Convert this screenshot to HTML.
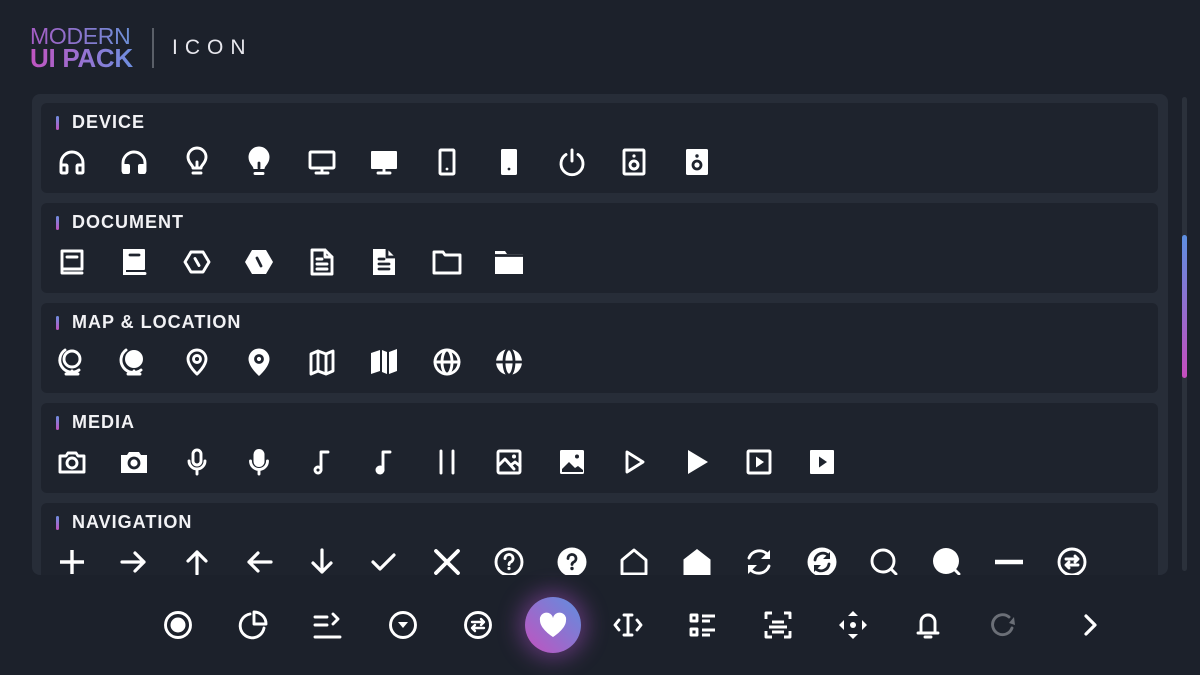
<!DOCTYPE html>
<html><head><meta charset="utf-8"><style>
*{margin:0;padding:0;box-sizing:border-box}
body{width:1200px;height:675px;background:#1c212b;position:relative;overflow:hidden;font-family:"Liberation Sans",sans-serif}
.logo1{position:absolute;left:30px;top:25px;font-size:23px;line-height:22px;font-weight:300;letter-spacing:-0.3px;background:linear-gradient(90deg,#a65cc4,#6d8fd6);-webkit-background-clip:text;color:transparent;transform:scaleX(1.0)}
.logo2{position:absolute;left:30px;top:45px;font-size:26px;line-height:26px;font-weight:bold;letter-spacing:-0.3px;background:linear-gradient(90deg,#c154c1,#6e8fe0);-webkit-background-clip:text;color:transparent}
.sep{position:absolute;left:152px;top:28px;width:2px;height:40px;background:#5a5f68}
.icontxt{position:absolute;left:172px;top:36px;font-size:21px;letter-spacing:7px;color:#e8e8ee;font-weight:300}
.outer{position:absolute;left:32px;top:94px;width:1136px;height:481px;background:#272d38;border-radius:8px;overflow:hidden}
.card{position:absolute;left:9px;width:1117px;height:90px;background:#1e232d;border-radius:6px}
.t{position:absolute;left:31px;top:9px;font-size:18px;font-weight:bold;color:#f2f2f5;letter-spacing:1px}
.bar{position:absolute;left:15px;top:13px;width:3px;height:14px;border-radius:2px;background:linear-gradient(#6d8fe0,#c054c0)}
svg.i{position:absolute;top:43px;width:32px;height:32px;overflow:visible}
.s{fill:none;stroke:#fff;stroke-width:2.9;stroke-linejoin:round;stroke-linecap:round}
.f{fill:#fff}
.d{fill:#1e232d}
.ds{fill:none;stroke:#1e232d;stroke-width:2.8;stroke-linecap:round}
.track{position:absolute;left:1182px;top:97px;width:5px;height:474px;background:#2b313b;border-radius:3px}
.thumb{position:absolute;left:1182px;top:235px;width:5px;height:143px;background:linear-gradient(#5d8fe0,#c54dbd);border-radius:3px}
svg.b{position:absolute;top:609px;width:32px;height:32px;overflow:visible}
.bs{fill:none;stroke:#fff;stroke-width:2.9;stroke-linejoin:round;stroke-linecap:round}
.heart{position:absolute;left:525px;top:597px;width:56px;height:56px;border-radius:50%;background:linear-gradient(45deg,#c352bf,#5f8fdf);box-shadow:0 0 22px 6px rgba(170,80,200,0.45)}
</style></head><body>
<div class="logo1">MODERN</div>
<div class="logo2">UI PACK</div>
<div class="sep"></div>
<div class="icontxt">ICON</div>

<div class="outer">
<div class="card" style="top:9px"><div class="bar"></div><div class="t">DEVICE</div>
<svg class="i" style="left:15px" viewBox="0 0 32 32"><path class="s" d="M5 25v-8a11 11 0 0 1 22 0v8"/><rect class="s" x="5" y="19" width="6" height="8" rx="1"/><rect class="s" x="21" y="19" width="6" height="8" rx="1"/></svg>
<svg class="i" style="left:77px" viewBox="0 0 32 32"><path class="s" d="M5 25v-8a11 11 0 0 1 22 0v8"/><rect class="f" x="4" y="18" width="8" height="10" rx="2"/><rect class="f" x="20" y="18" width="8" height="10" rx="2"/></svg>
<svg class="i" style="left:140px" viewBox="0 0 32 32"><path class="s" d="M12 22c0-3-5-5-5-11a9 9 0 0 1 18 0c0 6-5 8-5 11z"/><path class="s" d="M12 27h8M16 16v6"/></svg>
<svg class="i" style="left:202px" viewBox="0 0 32 32"><path class="f" d="M10.5 23c0-3-5-5.5-5-12a10.5 10.5 0 0 1 21 0c0 6.5-5 9-5 12z"/><path class="s" d="M12 27.5h8"/><path class="ds" d="M16 17v5"/></svg>
<svg class="i" style="left:265px" viewBox="0 0 32 32"><rect class="s" x="4" y="6" width="24" height="16" rx="1"/><path class="s" d="M16 22v4M10 27h12"/></svg>
<svg class="i" style="left:327px" viewBox="0 0 32 32"><rect class="f" x="3" y="5" width="26" height="18" rx="1"/><path class="s" d="M16 22v4M10 27h12"/></svg>
<svg class="i" style="left:390px" viewBox="0 0 32 32"><rect class="s" x="9" y="4" width="14" height="24" rx="1"/><circle class="f" cx="16" cy="23" r="1.4"/></svg>
<svg class="i" style="left:452px" viewBox="0 0 32 32"><rect class="f" x="8" y="3" width="16" height="26" rx="1.5"/><circle class="d" cx="16" cy="23" r="1.4"/></svg>
<svg class="i" style="left:515px" viewBox="0 0 32 32"><path class="s" d="M10 8.5a11 11 0 1 0 12 0"/><path class="s" d="M16 4v11"/></svg>
<svg class="i" style="left:577px" viewBox="0 0 32 32"><rect class="s" x="6" y="4" width="20" height="24" rx="1"/><circle class="s" cx="16" cy="19" r="4"/><circle class="f" cx="16" cy="10" r="1.6"/></svg>
<svg class="i" style="left:640px" viewBox="0 0 32 32"><rect class="f" x="5" y="3" width="22" height="26" rx="1.5"/><circle class="ds" cx="16" cy="19" r="4"/><circle class="d" cx="16" cy="10" r="1.7"/></svg>
</div>
<div class="card" style="top:109px"><div class="bar"></div><div class="t">DOCUMENT</div>
<svg class="i" style="left:15px" viewBox="0 0 32 32"><path class="s" d="M26 27H6V5h20v18H6"/><path class="s" d="M11 11h10"/></svg>
<svg class="i" style="left:77px" viewBox="0 0 32 32"><rect class="f" x="5" y="3" width="22" height="21" rx="1"/><rect class="f" x="5" y="3" width="3" height="26"/><path class="s" d="M7 27.5h20"/><path class="ds" d="M12 9h9"/></svg>
<svg class="i" style="left:140px" viewBox="0 0 32 32"><path class="s" d="M10 6h12l6 10-6 10H10L4 16z"/><path class="s" d="M14 12.5l4 7"/></svg>
<svg class="i" style="left:202px" viewBox="0 0 32 32"><path class="f" d="M9 4h14l7 12-7 12H9L2 16z"/><path class="ds" d="M14 12l4 8"/></svg>
<svg class="i" style="left:265px" viewBox="0 0 32 32"><path class="s" d="M6 4h13l7 7v17H6z"/><path class="s" d="M19 4v7h7M11 13h5M11 18h10M11 23h10"/></svg>
<svg class="i" style="left:327px" viewBox="0 0 32 32"><path class="f" d="M5 3h14l8 8v18H5z"/><path class="ds" d="M19 3v8h8"/><path class="ds" d="M11 13h5M11 18h10M11 23h10"/></svg>
<svg class="i" style="left:390px" viewBox="0 0 32 32"><path class="s" d="M3 6h9l2 3h15v18H3z"/></svg>
<svg class="i" style="left:452px" viewBox="0 0 32 32"><path class="f" d="M2 5h10l2 3h16v20H2z"/><path class="ds" d="M2 9.5h28"/></svg>
</div>
<div class="card" style="top:209px"><div class="bar"></div><div class="t">MAP &amp; LOCATION</div>
<svg class="i" style="left:15px" viewBox="0 0 32 32"><circle class="s" cx="16" cy="13" r="8"/><path class="s" d="M9 4a12 12 0 0 0 14 20M16 25v3M10 28h12"/></svg>
<svg class="i" style="left:77px" viewBox="0 0 32 32"><circle class="f" cx="16" cy="13" r="9"/><path class="s" d="M8 4a12 12 0 0 0 15 20M16 25v3M10 28h12"/></svg>
<svg class="i" style="left:140px" viewBox="0 0 32 32"><path class="s" d="M16 28s-9-8-9-15a9 9 0 0 1 18 0c0 7-9 15-9 15z"/><circle class="s" cx="16" cy="13" r="3.5"/></svg>
<svg class="i" style="left:202px" viewBox="0 0 32 32"><path class="f" d="M16 30S5.5 21 5.5 13a10.5 10.5 0 0 1 21 0c0 8-10.5 17-10.5 17z"/><circle class="ds" cx="16" cy="13" r="3.5"/></svg>
<svg class="i" style="left:265px" viewBox="0 0 32 32"><path class="s" d="M5 8l7-3 8 3 7-3v20l-7 3-8-3-7 3zM12 5v20M20 8v20"/></svg>
<svg class="i" style="left:327px" viewBox="0 0 32 32"><path class="f" d="M3 7l9-3v21l-9 3zM14 4l5 2v22l-5-2zM21 6l8-3v22l-8 3z"/></svg>
<svg class="i" style="left:390px" viewBox="0 0 32 32"><circle class="s" cx="16" cy="16" r="12"/><ellipse class="s" cx="16" cy="16" rx="5" ry="12"/><path class="s" d="M4 16h24"/></svg>
<svg class="i" style="left:452px" viewBox="0 0 32 32"><circle class="f" cx="16" cy="16" r="13"/><ellipse class="ds" cx="16" cy="16" rx="5" ry="13"/><path class="ds" d="M3 16h26"/></svg>
</div>
<div class="card" style="top:309px"><div class="bar"></div><div class="t">MEDIA</div>
<svg class="i" style="left:15px" viewBox="0 0 32 32"><path class="s" d="M4 10h6l2-3h8l2 3h6v16H4z"/><circle class="s" cx="16" cy="17" r="5"/></svg>
<svg class="i" style="left:77px" viewBox="0 0 32 32"><path class="f" d="M3 9h6l2-3h10l2 3h6v18H3z"/><circle class="ds" cx="16" cy="17" r="5"/></svg>
<svg class="i" style="left:140px" viewBox="0 0 32 32"><rect class="s" x="12" y="4" width="8" height="15" rx="4"/><path class="s" d="M8 15a8 8 0 0 0 16 0M16 23v5"/></svg>
<svg class="i" style="left:202px" viewBox="0 0 32 32"><rect class="f" x="10.5" y="3" width="11" height="18" rx="5.5"/><path class="s" d="M7.5 15a8.5 8.5 0 0 0 17 0M16 23.5v4.5"/></svg>
<svg class="i" style="left:265px" viewBox="0 0 32 32"><path class="s" d="M15 24V6h7"/><circle class="s" cx="12" cy="24" r="3"/></svg>
<svg class="i" style="left:327px" viewBox="0 0 32 32"><path class="s" d="M15 24V6h7"/><circle class="f" cx="12" cy="24" r="4.5"/></svg>
<svg class="i" style="left:390px" viewBox="0 0 32 32"><path class="s" d="M10 5v22M22 5v22"/></svg>
<svg class="i" style="left:452px" viewBox="0 0 32 32"><rect class="s" x="5" y="5" width="22" height="22" rx="1.5"/><path class="s" d="M6 19l6-6 9 10M18 19l4-3 5 4"/><circle class="f" cx="21" cy="10.5" r="2"/></svg>
<svg class="i" style="left:515px" viewBox="0 0 32 32"><rect class="f" x="4" y="4" width="24" height="24" rx="1.5"/><path class="d" d="M6 23l7-7 6 6 3-2 5 4v2H6z"/><circle class="d" cx="21" cy="10.5" r="2"/></svg>
<svg class="i" style="left:577px" viewBox="0 0 32 32"><path class="s" d="M9 6l16 10-16 10z"/></svg>
<svg class="i" style="left:640px" viewBox="0 0 32 32"><path class="f" d="M7 4l20 12L7 28z"/></svg>
<svg class="i" style="left:702px" viewBox="0 0 32 32"><rect class="s" x="5" y="5" width="22" height="22" rx="1"/><path class="f" d="M13 10.5l8 5.5-8 5.5z"/></svg>
<svg class="i" style="left:765px" viewBox="0 0 32 32"><rect class="f" x="4" y="4" width="24" height="24" rx="1"/><path class="d" d="M13 10.5l8 5.5-8 5.5z"/></svg>
</div>
<div class="card" style="top:409px"><div class="bar"></div><div class="t">NAVIGATION</div>
<svg class="i" style="left:15px" viewBox="0 0 32 32"><path class="s" d="M16 4v24M4 16h24" style="stroke-width:3.4;stroke-linecap:butt"/></svg>
<svg class="i" style="left:77px" viewBox="0 0 32 32"><path class="s" d="M4 16h22M17 7l9 9-9 9" style="stroke-width:3.2"/></svg>
<svg class="i" style="left:140px" viewBox="0 0 32 32"><path class="s" d="M16 28V6M7 15l9-9 9 9" style="stroke-width:3.2"/></svg>
<svg class="i" style="left:202px" viewBox="0 0 32 32"><path class="s" d="M28 16H6M15 7l-9 9 9 9" style="stroke-width:3.2"/></svg>
<svg class="i" style="left:265px" viewBox="0 0 32 32"><path class="s" d="M16 4v22M7 17l9 9 9-9" style="stroke-width:3.2"/></svg>
<svg class="i" style="left:327px" viewBox="0 0 32 32"><path class="s" d="M5 16l7 7 14-14" style="stroke-width:3.2"/></svg>
<svg class="i" style="left:390px" viewBox="0 0 32 32"><path class="s" d="M5 5l22 22M27 5L5 27" style="stroke-width:3.8"/></svg>
<svg class="i" style="left:452px" viewBox="0 0 32 32"><circle class="s" cx="16" cy="16" r="13"/><path class="s" d="M12 12.5a4 4 0 1 1 5.5 3.7c-1 .5-1.5 1-1.5 2.3"/><circle class="f" cx="16" cy="22.5" r="1.6"/></svg>
<svg class="i" style="left:515px" viewBox="0 0 32 32"><circle class="f" cx="16" cy="16" r="14.5"/><path class="ds" d="M12 12.5a4 4 0 1 1 5.5 3.7c-1 .5-1.5 1-1.5 2.3"/><circle class="d" cx="16" cy="22.5" r="1.7"/></svg>
<svg class="i" style="left:577px" viewBox="0 0 32 32"><path class="s" d="M4 14L16 4l12 10v14H4z"/></svg>
<svg class="i" style="left:640px" viewBox="0 0 32 32"><path class="f" d="M2.5 13.5L16 3l13.5 10.5V29h-27z"/></svg>
<svg class="i" style="left:702px" viewBox="0 0 32 32"><path class="s" d="M6 12a11 11 0 0 1 19-3M26 20a11 11 0 0 1-19 3"/><path class="f" d="M27 4v9h-9zM5 28v-9h9z"/></svg>
<svg class="i" style="left:765px" viewBox="0 0 32 32"><circle class="f" cx="16" cy="16" r="14.5"/><path class="ds" d="M9 14a8 8 0 0 1 13-5M23 18a8 8 0 0 1-13 5"/><path class="d" d="M24 6v7h-7zM8 26v-7h7z"/></svg>
<svg class="i" style="left:827px" viewBox="0 0 32 32"><circle class="s" cx="15" cy="15" r="11"/><path class="s" d="M23 23l5 5"/></svg>
<svg class="i" style="left:890px" viewBox="0 0 32 32"><circle class="f" cx="15" cy="15" r="13"/><path class="s" d="M23 23l5 5"/></svg>
<svg class="i" style="left:952px" viewBox="0 0 32 32"><path class="s" d="M2 16h28" style="stroke-width:4.5;stroke-linecap:butt"/></svg>
<svg class="i" style="left:1015px" viewBox="0 0 32 32"><circle class="s" cx="16" cy="16" r="13"/><path class="s" d="M10 19h12M13 22l-3-3 3-3M22 13H10M19 10l3 3-3 3"/></svg>
</div>
</div>
<div class="track"></div><div class="thumb"></div>

<svg class="b" style="left:162px" viewBox="0 0 32 32"><circle class="bs" cx="16" cy="16" r="12.5"/><circle class="f" cx="16" cy="16" r="7.5"/></svg>
<svg class="b" style="left:237px" viewBox="0 0 32 32"><path class="bs" d="M13 5a12 12 0 1 0 14 14"/><path class="bs" d="M17 3a12 12 0 0 1 12 12H17z"/></svg>
<svg class="b" style="left:312px" viewBox="0 0 32 32"><path class="bs" d="M3 8h12M3 16h12M3 28h25M21 5l5 5-5 5"/></svg>
<svg class="b" style="left:387px" viewBox="0 0 32 32"><circle class="bs" cx="16" cy="16" r="12.5"/><path class="f" d="M11 13h10l-5 6z"/></svg>
<svg class="b" style="left:462px" viewBox="0 0 32 32"><circle class="bs" cx="16" cy="16" r="12.5"/><path class="bs" d="M10 19h12M13 22l-3-3 3-3M22 13H10M19 10l3 3-3 3" style="stroke-width:2.4"/></svg>
<div class="heart"></div>
<svg class="b" style="left:537px" viewBox="0 0 32 32"><path class="f" d="M16 28S3 20 3 11.5A6.5 6.5 0 0 1 16 9a6.5 6.5 0 0 1 13 2.5C29 20 16 28 16 28z"/></svg>
<svg class="b" style="left:612px" viewBox="0 0 32 32"><path class="bs" d="M7 11l-4 5 4 5M25 11l4 5-4 5M16 6v20M12 6h8M12 26h8"/></svg>
<svg class="b" style="left:687px" viewBox="0 0 32 32"><rect class="bs" x="4" y="6" width="6" height="6"/><rect class="bs" x="4" y="20" width="6" height="6"/><path class="bs" d="M15 7h13M15 12h8M15 21h13M15 26h8" style="stroke-linecap:butt"/></svg>
<svg class="b" style="left:762px" viewBox="0 0 32 32"><path class="bs" d="M4 10V4h6M22 4h6v6M28 22v6h-6M10 28H4v-6M10 13h12M7 18h18M10 23h12" style="stroke-linecap:butt"/></svg>
<svg class="b" style="left:837px" viewBox="0 0 32 32"><path class="f" d="M16 2l5 5H11zM16 30l-5-5h10zM2 16l5-5v10zM30 16l-5 5V11z"/><circle class="f" cx="16" cy="16" r="3"/></svg>
<svg class="b" style="left:912px" viewBox="0 0 32 32"><path class="bs" d="M9 24V13a7 7 0 0 1 14 0v11zM6 24h20"/><path class="bs" d="M13 28h6"/></svg>
<svg class="b" style="left:987px" viewBox="0 0 32 32"><path style="fill:none;stroke:#6b6f77;stroke-width:2.9;stroke-linecap:round" d="M25 19A10 10 0 1 1 22 8"/><path style="fill:#6b6f77" d="M22 14l5-6 1 8z"/></svg>
<svg class="b" style="left:1074px" viewBox="0 0 32 32"><path class="bs" d="M12 7l9 9-9 9" style="stroke-width:3.2"/></svg>
</body></html>
